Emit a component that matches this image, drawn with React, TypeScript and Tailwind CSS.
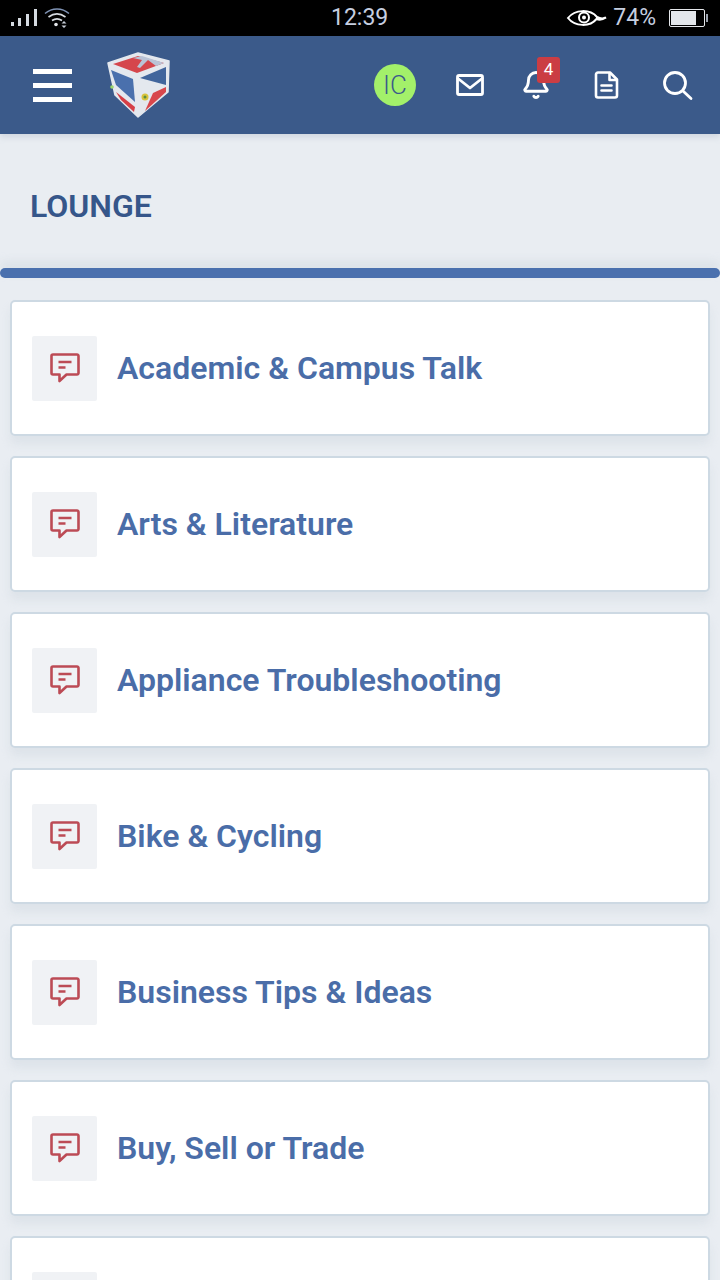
import { Bell } from 'lucide-react';

const boards = [
    'Academic & Campus Talk',
    'Arts & Literature',
    'Appliance Troubleshooting',
    'Bike & Cycling',
    'Business Tips & Ideas',
    'Buy, Sell or Trade',
    '',
];

const StatusBar = () => (
    <div className="h-[36px] shrink-0 bg-black flex items-center justify-between pl-[11px] pr-[12px] relative">
        <div className="flex items-center gap-[6px]">
            <svg width="28" height="20" viewBox="0 0 28 20" fill="#d5dae0">
                <rect x="0" y="14" width="3" height="4" />
                <rect x="7" y="10" width="3" height="8" />
                <rect x="15" y="6" width="3" height="12" />
                <rect x="23" y="1" width="3" height="17" />
            </svg>
            <svg width="26" height="22" viewBox="0 0 26 22" fill="none" className="-ml-[1px]">
                <path d="M1 6.500C8 .5 18 .5 25 6.500" stroke="#7f93b5" strokeWidth="1.6" />
                <path d="M4.500 10C10 6 16 6 21.500 10" stroke="#d5dae0" strokeWidth="1.6" />
                <path d="M8 13.500C11 11.500 15 11.500 18 13.500" stroke="#d5dae0" strokeWidth="1.6" />
                <circle cx="12" cy="17.500" r="1.800" fill="#e5e7eb" />
                <path d="M20 14l2.500 2.500h-5zM20 21l2.500-2.500h-5z" fill="#c5ccd6" />
            </svg>
        </div>
        <span className="absolute left-[331px] top-[3px] text-[23px] leading-[30px] text-[#c6cfe0] font-['Roboto',sans-serif]">12:39</span>
        <div className="flex items-center">
            <svg width="42" height="20" viewBox="0 0 42 20" fill="none" className="mr-[5px]">
                <path d="M2 10C9 1 24 1 31 9c3 1.500 7 1.500 9 .5-3 2-7 2.500-9.500 1.500C24 19 9 19 2 10z" stroke="#fff" strokeWidth="2" />
                <circle cx="18" cy="9.500" r="5" stroke="#fff" strokeWidth="2" />
                <circle cx="18" cy="9.500" r="2" fill="#fff" />
            </svg>
            <span className="text-[23px] leading-[30px] text-[#c6cfe0] font-['Roboto',sans-serif]">74%</span>
            <div className="ml-[13px] w-[36px] h-[18px] border border-[#e5e7eb] rounded-[2px] p-[1px] flex">
                <div className="w-[25px] bg-[#e3e6ea]" />
            </div>
            <div className="ml-[1px] w-[2px] h-[8px] bg-[#9ca3af]" />
        </div>
    </div>
);

const Logo = () => (
    <svg width="66" height="66" viewBox="0 0 66 66">
        <path d="M2 11 32 1 63 9 62 40 32 65 9 43z" fill="#e4e8ee" stroke="#e4e8ee" strokeWidth="1.500" strokeLinejoin="round" />
        <path d="M7 12 32 4 58 11 31 21z" fill="#d5464c" />
        <path d="M27 6 36 4 58 11 50 14 42 8 34 16 31 15 36 8z" fill="#b9c3d6" />
        <path d="M5 18 27 27 29 50 10 33z" fill="#4a70ad" />
        <path d="M10 40 29 55 28 60 15 48z" fill="#d63f46" />
        <path d="M34 26 60 15 60 33z" fill="#41659c" />
        <path d="M60 35 60 40 39 59 47 41z" fill="#d8474c" />
        <circle cx="39" cy="45" r="3.500" fill="#d9c33c" />
        <circle cx="39" cy="45" r="1.500" fill="#5b8f3f" />
        <circle cx="6" cy="35" r="1.800" fill="#9ad66b" />
    </svg>
);

const MailIcon = () => (
    <svg width="30" height="30" viewBox="0 0 30 30" fill="none" stroke="#fff" strokeWidth="2.800" strokeLinejoin="round" strokeLinecap="round" className="ml-[39px] shrink-0">
        <rect x="2.500" y="5.500" width="25" height="19" rx="1.500" />
        <path d="M3 8.500 15 18 27 8.500" />
    </svg>
);

const FileIcon = () => (
    <svg width="30" height="30" viewBox="0 0 30 30" fill="none" stroke="#fff" strokeWidth="2.600" strokeLinejoin="round" strokeLinecap="round" className="ml-[41px] shrink-0">
        <path d="M6 2.500h12l7 7v16a2 2 0 0 1-2 2H6a2 2 0 0 1-2-2v-21a2 2 0 0 1 2-2z" />
        <path d="M17.500 3v7h7M9.500 15.500h10M9.500 20.500h10" />
    </svg>
);

const SearchIcon = () => (
    <svg width="32" height="32" viewBox="0 0 32 32" fill="none" stroke="#fff" strokeWidth="2.800" strokeLinecap="round" className="ml-[41px] shrink-0">
        <circle cx="12" cy="14" r="10.500" />
        <path d="M20 22 28 29.500" />
    </svg>
);

const Header = () => (
    <div className="h-[98px] shrink-0 bg-[#3b5a8a] flex items-center shadow-[0_3px_6px_rgba(160,172,190,0.35)]">
        <div className="ml-[33px] w-[39px] flex flex-col gap-[9px]">
            <div className="h-[5px] bg-white" />
            <div className="h-[5px] bg-white" />
            <div className="h-[5px] bg-white" />
        </div>
        <div className="ml-[34px]">
            <Logo />
        </div>
        <div className="ml-[202px] w-[42px] h-[42px] shrink-0 rounded-full bg-[#a3f06a] flex items-center justify-center text-[26px] text-[#3b5a8a] font-['Roboto',sans-serif] font-light">
            IC
        </div>
        <MailIcon />
        <div className="ml-[36px] relative w-[30px] h-[30px]">
            <Bell className="w-[30px] h-[30px] text-white" strokeWidth={2.3} />
            <div className="absolute left-[16px] -top-[13px] w-[23px] h-[26px] rounded-[3px] bg-[#cb3d43] flex items-center justify-center text-[17px] text-white font-['Roboto',sans-serif]">
                4
            </div>
        </div>
        <FileIcon />
        <SearchIcon />
    </div>
);

const BoardIcon = () => (
    <div className="w-[65px] h-[65px] shrink-0 rounded-[2px] bg-[#f0f2f5] flex items-center justify-center">
        <svg width="32" height="32" viewBox="0 0 32 32" fill="none" stroke="#bc4b55" strokeWidth="2.600" strokeLinejoin="round">
            <path d="M4 2.500h24a1.500 1.500 0 0 1 1.500 1.500v17a1.500 1.500 0 0 1-1.500 1.500H17.500L10.500 29v-6.500H4A1.500 1.500 0 0 1 2.500 21V4A1.500 1.500 0 0 1 4 2.500z" />
            <path d="M9.500 10h13M9.500 15.500h7" />
        </svg>
    </div>
);

const BoardRow = ({ title }: { title: string }) => (
    <div className="h-[136px] shrink-0 bg-white border-2 border-[#cdd9e3] rounded-[5px] shadow-[0_8px_8px_rgba(195,205,215,0.3)] flex items-center gap-[20px] pl-[20px]">
        <BoardIcon />
        <span className="text-[32px] font-semibold text-[#4a6da8] font-['Roboto',sans-serif]">{title}</span>
    </div>
);

export default function App() {
    return (
        <div className="w-[720px] h-[1280px] overflow-hidden flex flex-col bg-[#e9edf2] font-['Roboto',sans-serif]">
            <StatusBar />
            <Header />
            <div className="h-[134px] shrink-0 flex items-center pl-[30px] pt-[10px]">
                <h1 className="text-[32px] font-semibold text-[#36568a]">LOUNGE</h1>
            </div>
            <div className="h-[10px] shrink-0 bg-[#4a70ae] rounded-full shadow-[0_-6px_10px_rgba(195,205,215,0.4)]" />
            <div className="flex flex-col gap-[20px] px-[10px] pt-[22px]">
                {boards.map((b, i) => (
                    <BoardRow key={i} title={b} />
                ))}
            </div>
        </div>
    );
}
